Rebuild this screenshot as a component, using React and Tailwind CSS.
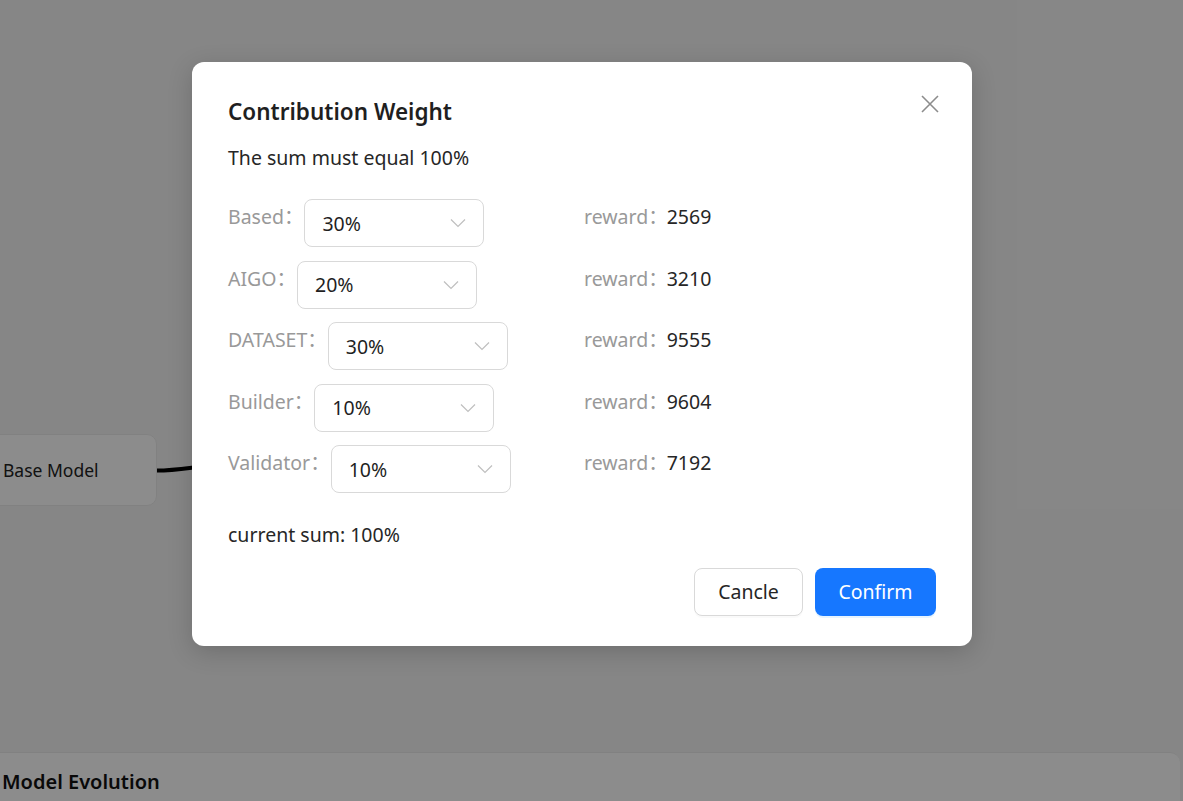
import React from "react";

const rows = [
  { label: "Based", value: "30%", reward: "2569" },
  { label: "AIGO", value: "20%", reward: "3210" },
  { label: "DATASET", value: "30%", reward: "9555" },
  { label: "Builder", value: "10%", reward: "9604" },
  { label: "Validator", value: "10%", reward: "7192" },
];

const font = { fontFamily: '"Noto Sans", "Noto Sans CJK SC", sans-serif' };

function Chevron() {
  return (
    <svg width="16" height="10" viewBox="0 0 16 10" fill="none" className="shrink-0">
      <path d="M1 1.5 L8 8.5 L15 1.5" stroke="#bfbfbf" strokeWidth="1.2" />
    </svg>
  );
}

function SelectBox({ value }) {
  return (
    <div className="ml-px flex h-12 w-[180px] items-center justify-between rounded-lg border border-[#d9d9d9] bg-white pl-[17px] pr-[17px]">
      <span className="pt-px text-[19.5px] text-[#1f1f1f]">{value}</span>
      <Chevron />
    </div>
  );
}

export default function App() {
  return (
    <div className="relative h-[801px] w-[1183px] overflow-hidden bg-[#f5f5f5]" style={font}>
      {/* page behind the modal */}
      <div className="absolute left-[-40px] top-[434px] flex h-[72px] w-[197px] items-center rounded-[10px] border border-[#ececec] bg-white pl-[42px]">
        <span className="text-[17.5px] text-[#222]">Base Model</span>
      </div>
      <svg className="absolute left-[157px] top-[462px]" width="60" height="16" viewBox="0 0 60 16">
        <path d="M0 8.5 C14 8.5 24 7 40 5" stroke="#000" strokeWidth="4" fill="none" />
      </svg>
      <div className="absolute left-0 top-[752px] h-[60px] w-[1180px] rounded-tr-[10px] border-t border-[#ececec] bg-white pt-[14px] pl-[2px]">
        <span className="text-[20px] font-semibold text-[#111]">Model Evolution</span>
      </div>

      {/* overlay */}
      <div className="absolute inset-0 bg-black/45">
        <div className="ml-[192px] mt-[62px] w-[780px] rounded-xl bg-white px-9 pb-[30px] pt-9 shadow-[0_6px_24px_rgba(0,0,0,0.18)]">
          <div className="flex items-start justify-between">
            <h2 className="text-[22.5px] font-semibold leading-[28px] text-[#1f1f1f]">Contribution Weight</h2>
            <svg width="20" height="20" viewBox="0 0 20 20" className="-mr-[4px] -mt-[4px]">
              <path d="M2 2 L18 18 M18 2 L2 18" stroke="#8c8c8c" strokeWidth="1.6" />
            </svg>
          </div>
          <p className="mt-[18px] text-[19.5px] leading-[28px] text-[#262626]">The sum must equal 100%</p>

          <div className="mt-[27px] flex flex-col gap-[13.5px]">
            {rows.map((r) => (
              <div key={r.label} className="grid grid-cols-[356px_1fr] items-start">
                <div className="flex items-start">
                  <span className="text-[19.5px] leading-[36px] text-[#999]">{r.label}：</span>
                  <SelectBox value={r.value} />
                </div>
                <div className="flex items-start text-[19.5px] leading-[36px]">
                  <span className="text-[#999]">reward：</span>
                  <span className="-ml-px text-[#262626]">{r.reward}</span>
                </div>
              </div>
            ))}
          </div>

          <p className="mt-[28px] text-[19.5px] leading-[28px] text-[#262626]">current sum: 100%</p>

          <div className="mt-[19px] flex justify-end gap-3">
            <button className="h-12 w-[109px] rounded-lg border border-[#d9d9d9] bg-white text-[19.5px] text-[#262626] shadow-[0_2px_0_rgba(0,0,0,0.02)]">
              Cancle
            </button>
            <button className="h-12 w-[121px] rounded-lg bg-[#1677ff] text-[19.5px] text-white shadow-[0_2px_0_rgba(5,145,255,0.1)]">
              Confirm
            </button>
          </div>
        </div>
      </div>
    </div>
  );
}
